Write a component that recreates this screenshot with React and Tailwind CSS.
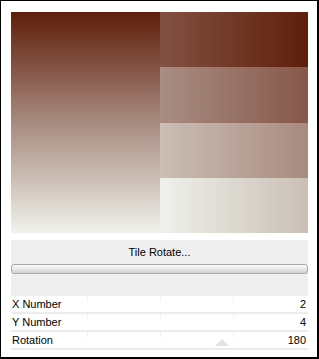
import React from 'react';

const rows = [
  { label: 'X Number', value: '2' },
  { label: 'Y Number', value: '4' },
  { label: 'Rotation', value: '180' },
];

const tiles = [
  'bg-[linear-gradient(to_left,#5e1f0a,#835142)]',
  'bg-[linear-gradient(to_left,#86574a,#a98e84)]',
  'bg-[linear-gradient(to_left,#a88a7e,#cbbfb6)]',
  'bg-[linear-gradient(to_left,#cabfb5,#eef1eb)]',
];

export default function App() {
  return (
    <div
      className="w-[319px] h-[359px] bg-white border-l border-t border-r-2 border-b-2 border-black text-black text-[11px] leading-none"
      style={{ fontFamily: '"Liberation Sans", Arial, sans-serif' }}
    >
      <div className="ml-[10px] mt-[11px] w-[297px] flex flex-col">
        {/* preview */}
        <div className="h-[221px] flex">
          <div className="w-[149px] bg-[linear-gradient(to_bottom,#5e1f0a,#835344_25%,#a78b80_50%,#cbbdb4_75%,#f0f3ed)]" />
          <div className="flex-1 flex flex-col">
            {tiles.map((t, i) => (
              <div key={i} className={`flex-1 ${t}`} />
            ))}
          </div>
        </div>

        {/* title + slider */}
        <div className="mt-[7px] h-[56px] bg-[#efefef] flex flex-col">
          <div className="h-[23px] flex items-center justify-center pt-[1px]">Tile Rotate...</div>
          <div className="mt-[1px] h-[10px] rounded-[3px] border border-[#a9a9a9] bg-[linear-gradient(to_bottom,#fbfbfb,#e8e8e8_50%,#d0d0d0)]" />
        </div>

        {/* parameters */}
        <div className="relative flex flex-col">
          {rows.map((r) => (
            <div key={r.label} className="h-[18px] flex flex-col">
              <div className="h-[16px] flex items-center justify-between pr-[2px] pl-[1px] relative">
                <span>{r.label}</span>
                <span>{r.value}</span>
                <span className="absolute left-[76px] top-0 h-[6px] w-px bg-[#f2f2f2]" />
                <span className="absolute left-[149px] top-0 h-[6px] w-px bg-[#f2f2f2]" />
                <span className="absolute left-[222px] top-0 h-[6px] w-px bg-[#f2f2f2]" />
              </div>
              <div className="h-[2px] bg-[#ececec]" />
            </div>
          ))}
          <svg className="absolute left-[204px] top-[43px]" width="14" height="7" viewBox="0 0 14 7">
            <polygon points="0,7 7,0 14,7" fill="#e2e2e2" />
          </svg>
        </div>
      </div>
    </div>
  );
}
